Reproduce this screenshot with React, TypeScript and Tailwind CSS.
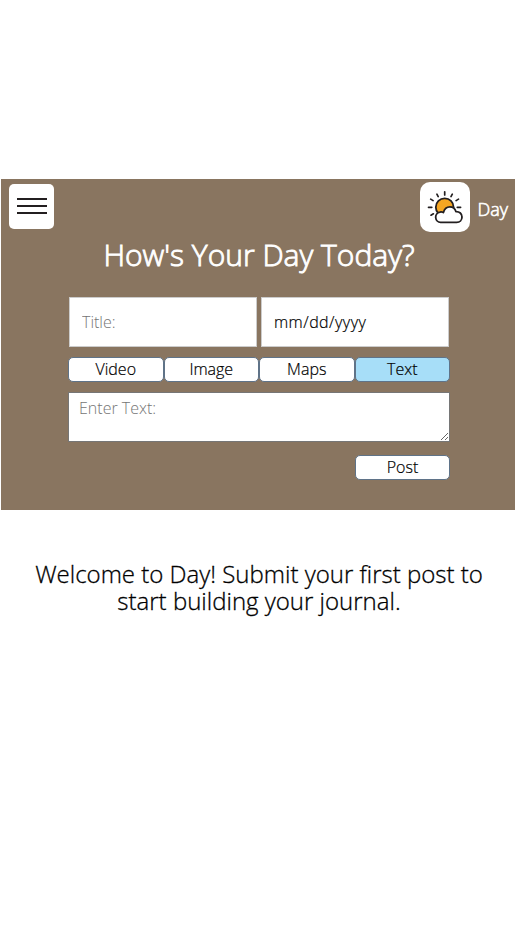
import React from "react";

const tabs = ["Video", "Image", "Maps", "Text"];

const buttonBase =
  "h-[25px] rounded-[5px] border border-[#5f7388] text-center text-[16px] leading-[22px] font-light text-black [-webkit-text-stroke:0.2px_black]";

function WeatherLogo() {
  return (
    <svg viewBox="0 0 50 50" className="h-[50px] w-[50px] rounded-[10px] bg-white" fill="none" strokeLinecap="round" strokeLinejoin="round">
      <circle cx="24.7" cy="25.2" r="8.9" fill="#f5a623" stroke="#231f20" strokeWidth="1.8" />
      <path
        d="M24.7 9.800v3.200M16.900 12.200l1.300 2.400M10.700 17.100l2.400 1.500M8.500 25.300h3.300M11 33.200l2.400-1.400M32.300 12.200L31 14.600M38.500 17.100l-2.400 1.500M37.300 25.300h3.300"
        stroke="#231f20"
        strokeWidth="1.7"
      />
      <path
        d="M20.600 40.400a5.200 5.200 0 0 1-.7-10.300c1.300-.3 2.500-.1 3.500.4 1.100-3.800 3.500-5.700 6.400-5.700 3.100 0 5.300 1.900 6.100 4.800 3.600-.2 6.100 2.200 6.100 5.400 0 3.100-2.300 5.400-5.300 5.400z"
        fill="#fff"
        stroke="#231f20"
        strokeWidth="1.8"
      />
    </svg>
  );
}

export default function App() {
  return (
    <main className="min-h-[925px] w-[516px] bg-white px-px pt-[179px] font-['Open_Sans',sans-serif] font-light text-black">
      <section className="h-[331px] bg-[#897560]">
        <header className="flex h-[53px] justify-between pt-[3px] pr-[7px] pl-2">
          <button aria-label="Menu" className="mt-[2px] flex h-[45px] w-[45px] flex-col items-center gap-[5px] rounded-[5px] bg-white pt-[14px]">
            <span className="h-[2px] w-[30px] bg-[#231f20]" />
            <span className="h-[2px] w-[30px] bg-[#231f20]" />
            <span className="h-[2px] w-[30px] bg-[#231f20]" />
          </button>
          <div className="flex h-[50px] gap-[7px]">
            <WeatherLogo />
            <span className="pt-[14px] text-[18px] leading-[27px] text-white [-webkit-text-stroke:0.6px_white]">Day</span>
          </div>
        </header>
        <h1 className="mt-[2px] h-[42px] pl-[2px] text-center text-[30px] leading-[42px] whitespace-nowrap text-white [-webkit-text-stroke:0.9px_white]">
          How's Your Day Today?
        </h1>
        <form className="mr-[65px] ml-[67px] w-[382px] pt-[21px]">
          <div className="flex justify-between px-px">
            <input
              placeholder="Title:"
              className="h-[50px] w-[188px] border border-[#cccccc] bg-white px-[12px] pb-px text-[16px] outline-none placeholder:text-[#757575]"
            />
            <div className="flex h-[50px] w-[188px] items-center border border-[#cccccc] bg-white px-[12px] text-[16px] tracking-[0.47px] [-webkit-text-stroke:0.2px_black]">
              mm/dd/yyyy
            </div>
          </div>
          <div className="mt-[10px] flex">
            {tabs.map((t) => (
              <button key={t} type="button" className={`${buttonBase} flex-1 pb-[2px] ${t === "Text" ? "bg-[#a7def8]" : "bg-white"}`}>
                {t}
              </button>
            ))}
          </div>
          <textarea
            placeholder="Enter Text:"
            className="mt-[10px] block h-[50px] w-[382px] resize border border-[#767676] bg-white px-[10px] py-[4px] text-[16px] leading-[22px] outline-none placeholder:text-[#757575]"
          />
          <button type="button" className={`${buttonBase} mt-[13px] ml-auto block w-[95px] bg-white pb-[2px]`}>
            Post
          </button>
        </form>
      </section>
      <div className="pt-[50px] pl-[2px] text-center text-[24px] leading-[27px] [-webkit-text-stroke:0.3px_black]">
        <p>Welcome to Day! Submit your first post to</p>
        <p>start building your journal.</p>
      </div>
    </main>
  );
}
